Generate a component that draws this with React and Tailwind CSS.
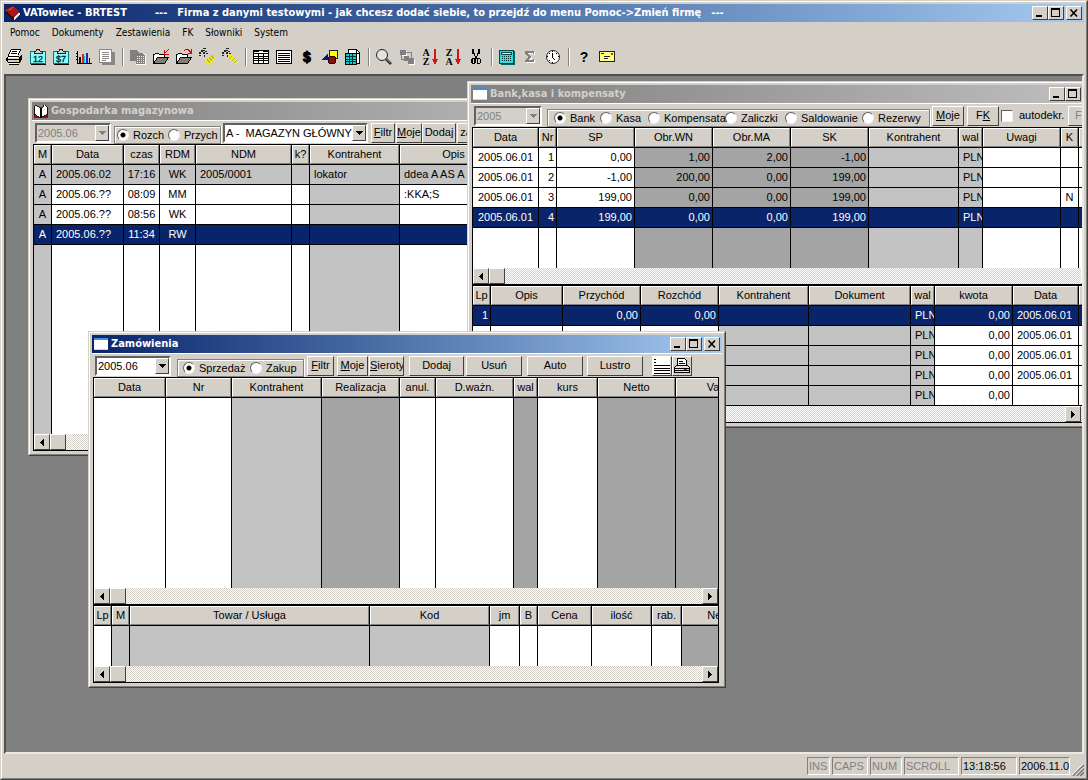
/**
 * VATowiec - main MDI shell with the warehouse, bank and order windows
 */
import React from 'react';
import clsx from 'clsx';

const RAISED = 'border border-t-white border-l-white border-r-[#404040] border-b-[#404040] bg-[#d4d0c8]';
const SUNKEN = 'border border-t-[#808080] border-l-[#808080] border-r-white border-b-white';

const FILL = {
  white: 'bg-white',
  light: 'bg-[#c3c3c3]',
  dark: 'bg-[#a4a4a4]',
};

const ALIGN = {
  left: 'text-left pl-1',
  center: 'text-center',
  right: 'text-right pr-0.5',
};

/* ---------- icons ---------- */

const Icon = ({ children, size = 'size-[18px]' }) => (
  <svg viewBox="0 0 18 18" className={size} shapeRendering="crispEdges" aria-hidden="true">
    {children}
  </svg>
);

const PrinterIcon = () => (
  <Icon>
    <path d="M5 2h9v1h-1v2h-1v3H3V6h1V4h1z" fill="#fff" />
    <path d="M5 1h10v2h-1v2h-1v2h-1V5h1V3h1V2H5v2H4v2H3v2H2V6h1V4h1V2h1z" />
    <path d="M6 3h5v1H6zM5 5h6v1H5z" />
    <path d="M2 8h11v1h1V7h1v5h-1v2h-1v2H2v-2H1v-4h1z" fill="#d4d0c8" />
    <path d="M2 8h11v1H2zM1 9h1v5H1zM0 10h1v3H0zM1 11h12v1H1zM13 9h1V8h1V7h1v5h-1v2h-1v1h-1zM2 14h11v1H2zM3 16h10v1H3z" />
    <path d="M2 9h10v1H2zM3 15h9v1H3z" fill="#fff" />
    <path d="M9 12h2v1H9z" fill="#d8c800" />
  </Icon>
);

const CalendarIcon = ({ label }) => (
  <Icon>
    <path d="M1.500 3.500h15v12h-15z" fill="#8ff" stroke="#087878" />
    <path d="M2 16.500h15" stroke="#000" />
    <path d="M5 5V3h2l1-2h2l1 2h2v2z" fill="#d4d0c8" stroke="#222" />
    <text x="9" y="14" fontSize="9" fontFamily="Liberation Sans, sans-serif" textAnchor="middle" stroke="#044" strokeWidth="0.3">
      {label}
    </text>
  </Icon>
);

const ChartIcon = () => (
  <Icon>
    <path d="M2 3h1v12h14v1H2zM1 5h1v1H1zM1 8h1v1H1zM1 11h1v1H1z" />
    <path d="M4 9h2v6H4z" fill="#111" />
    <path d="M7 6h2v9H7z" fill="#d22" />
    <path d="M9 8h1v7H9z" fill="#0cc" />
    <path d="M11 5h2v10h-2z" fill="#22c" />
    <path d="M14 10h1v5h-1z" fill="#111" />
  </Icon>
);

const PagesIcon = () => (
  <Icon>
    <path d="M4 4h13v13H4z" fill="#888" />
    <path d="M1.500 1.500h12v13h-12z" fill="#fff" stroke="#888" />
    <path d="M4 4.500h7M4 6.500h7M4 8.500h7M4 10.500h7M4 12.500h4" stroke="#888" />
  </Icon>
);

const CopyIcon = () => (
  <Icon>
    <path d="M1 2h6l3 3v8H1z" fill="#808080" />
    <path d="M7 5h7l3 3v9H7z" fill="#fff" />
    <path d="M7 5h6l3 3v8H7z" fill="#808080" />
    <path d="M8 8.500h7M8 10.500h7M8 12.500h7M8 14.500h7" stroke="#eee" strokeDasharray="1 1" />
  </Icon>
);

const FolderIcon = ({ inward }) => (
  <Icon>
    <path d="M1.500 15V6.500h1l1-1h3l1 1h5v3" fill="#fff" stroke="#000" />
    <path d="M1.500 15.500l4-6h11l-4 6z" fill="#808070" stroke="#000" />
    {inward ? (
      <path d="M16 1h1v1h-1zM15 2h1v1h-1zM14 3h1v1h-1zM12 2h1v4h4v1h-5zM13 4h1v1h-1z" fill="#d00" />
    ) : (
      <path d="M9 2h1V1h4v1h1v1h1V1h1v5h-4V5h2V4h-1V3h-1V2h-3v1H9z" fill="#d00" />
    )}
  </Icon>
);

const RopeIcon = ({ flip }) => (
  <Icon>
    <path d="M5 0h3v1H5zM5 2h2v1H5zM3 2h2v2H3zM1 4h2v2H1zM5 4h2v2H5zM7 3h2v1H7zM8 5h2v1H8zM1 7h2v1H1zM6 7h1v2H6z" fill="#222" />
    {flip ? (
      <>
        <path d="M6 9l3-3 8 7v3h-4z" fill="#f4ec10" />
        <path d="M8 11l3-3M11 13l3-3M13 15l3-3" stroke="#b0a860" />
      </>
    ) : (
      <>
        <path d="M7 13l3 4 7-7-3-4z" fill="#f4ec10" />
        <path d="M9 11l3 4M11 9l3 4M13 7l3 4" stroke="#b0a860" />
      </>
    )}
  </Icon>
);

const TableIcon = () => (
  <Icon>
    <path d="M1.500 2.500h15v13h-15z" fill="#fff" stroke="#000" />
    <path d="M2 3.500h14M2 5.500h14M2 8.500h14M2 10.500h14M2 12.500h14M6.500 5v10M11.500 5v10" stroke="#000" />
    <path d="M7 3h4v1H7z" fill="#fff" />
  </Icon>
);

const ListIcon = () => (
  <Icon>
    <path d="M1.500 2.500h15v13h-15z" fill="#fff" stroke="#000" />
    <path d="M3 5.500h12M3 7.500h12M3 9.500h12M3 11.500h12M3 13.500h12" stroke="#000" />
  </Icon>
);

const DollarIcon = () => (
  <Icon>
    <text x="9" y="14" fontSize="14" fontWeight="bold" fontFamily="Liberation Sans, sans-serif" textAnchor="middle" stroke="#000">
      $
    </text>
  </Icon>
);

const ShapesIcon = () => (
  <Icon>
    <path d="M8.500 2.500h8v8h-8z" fill="#ff0" stroke="#222" />
    <path d="M0 12l7-7v7z" fill="#00128c" />
    <circle cx="11" cy="12" r="4" fill="#7c1414" stroke="#300" />
  </Icon>
);

const SheetIcon = () => (
  <Icon>
    <path d="M4.500 1.500h8l3 3v11h-11z" fill="#fff" stroke="#000" />
    <path d="M12 2v3h4" stroke="#000" fill="none" />
    <path d="M1.500 5.500h11v11h-11z" fill="#1cc" stroke="#000" />
    <path d="M2 8.500h10M2 11.500h10M2 13.500h10M5.500 6v10M8.500 6v10" stroke="#033" />
  </Icon>
);

const SearchIcon = () => (
  <Icon>
    <circle cx="7" cy="7" r="5.500" fill="#e4e2dc" stroke="#222" shapeRendering="auto" />
    <path d="M11 11l5 5" stroke="#222" strokeWidth="2.500" shapeRendering="auto" />
    <path d="M11.500 11l4 4" stroke="#aaa" shapeRendering="auto" />
  </Icon>
);

const LinkedIcon = () => (
  <Icon>
    <path d="M3 3h6v5H3zM11 11h6v6h-6z" fill="#fff" />
    <path d="M2 2h6v5H2zM6 8h5v5H6zM10 10h6v6h-6z" fill="#808080" />
    <path d="M8 4.500h5.500V10M3.500 7v4.500H6" stroke="#808080" fill="none" />
  </Icon>
);

const SortIcon = ({ top, bottom }) => (
  <Icon>
    <text x="5" y="8" fontSize="10" fontWeight="bold" fontFamily="Liberation Serif, serif" textAnchor="middle">{top}</text>
    <text x="5" y="17" fontSize="10" fontWeight="bold" fontFamily="Liberation Serif, serif" textAnchor="middle">{bottom}</text>
    <path d="M13 1h2v11h-2z" fill="#e01010" />
    <path d="M11 11h6l-3 6z" fill="#e01010" />
  </Icon>
);

const ScissorsIcon = () => (
  <Icon>
    <path d="M5 1h2v4h1v3h1v2H8V8H7V6H5zM11 1h2v5h-2v2h-1v2H9V8h1V5h1z" />
    <path d="M8 9h2v2H8zM5 10h3v1H5zM4 11h2v4H4zM5 15h3v1H5zM7 11h2v4H7zM10 10h3v1h-3zM10 11h1v4h-1zM10 15h3v1h-3zM13 11h1v4h-1z" />
  </Icon>
);

const CalculatorIcon = () => (
  <Icon>
    <path d="M3 3h14v14H3z" fill="#066" />
    <path d="M1.500 2.500h14v13h-14z" fill="#3dd" stroke="#044" />
    <path d="M3.500 4.500h10v2h-10z" fill="#bff" stroke="#044" />
    <path d="M4 8.500h10M4 10.500h10M4 12.500h10" stroke="#033" strokeDasharray="1 1" />
  </Icon>
);

const SigmaIcon = () => (
  <Icon>
    <path d="M5 4h9v3h-1l-1-1H8l3 4-3 3h4l2-1v3H5v-1l3-4-3-4z" fill="#fff" />
    <path d="M4 3h9v3h-1l-1-1H7l3 4-3 3h4l2-1v3H4v-1l3-4-3-4z" fill="#808080" />
  </Icon>
);

const ClockIcon = () => (
  <Icon>
    <circle cx="9" cy="9" r="6.500" fill="#fff" stroke="#222" shapeRendering="auto" />
    <path d="M8 3h1v1H8zM8 14h1v1H8zM3 8h1v1H3zM14 8h1v1h-1zM5 5h1v1H5zM12 5h1v1h-1zM5 12h1v1H5z" />
    <path d="M8.500 5v4.500l3 3" stroke="#000" fill="none" />
  </Icon>
);

const HelpIcon = () => (
  <Icon>
    <text x="9" y="14" fontSize="14" fontWeight="bold" fontFamily="Liberation Sans, sans-serif" textAnchor="middle">?</text>
  </Icon>
);

const MailIcon = () => (
  <Icon>
    <path d="M1.500 3.500h15v10h-15z" fill="#ffff80" stroke="#222" />
    <path d="M3 5.500h3M6 8.500h6M6 10.500h4" stroke="#222" />
    <path d="M13 5h2v2h-2z" fill="#c03000" />
  </Icon>
);

const RedBookIcon = () => (
  <Icon size="size-4">
    <path d="M0 6l9-5 8 7-7 6z" fill="#a81818" />
    <path d="M0 6l10 8v4L0 9z" fill="#3c0808" />
    <path d="M10 14l7-6v3l-7 6z" fill="#f4e8e0" />
    <path d="M4 6l5-3" stroke="#f06060" />
  </Icon>
);

const OpenBookIcon = () => (
  <Icon size="size-4">
    <path d="M1 5h16v12H1z" fill="#8c1010" />
    <path d="M2 3h2l5 3v10H7l-5-3z" fill="#fff" stroke="#200" />
    <path d="M10 6l3-4 3 2v9l-3 1-3 2z" fill="#fff" stroke="#200" />
    <path d="M8 6h2v11H8z" />
  </Icon>
);

const FormIcon = () => (
  <Icon size="size-4">
    <path d="M1 2h16v14H1z" fill="#fff" />
    <path d="M1 2h16v3H1z" fill="#3c8ce0" />
    <path d="M1 15h16v1H1z" fill="#c0d8f0" />
  </Icon>
);

/* ---------- window chrome ---------- */

const controlClass = 'flex h-3.5 w-4 items-center justify-center';

const WindowControls = () => (
  <div className="flex shrink-0 items-center pr-0.5">
    <button aria-label="Minimalizuj" className={clsx(RAISED, controlClass)}>
      <svg viewBox="0 0 10 10" className="size-2.5" shapeRendering="crispEdges"><path d="M1 7h6v2H1z" /></svg>
    </button>
    <button aria-label="Maksymalizuj" className={clsx(RAISED, controlClass)}>
      <svg viewBox="0 0 10 10" className="size-2.5" shapeRendering="crispEdges"><path d="M0 0h9v9H0zM1 2v6h7V2z" fillRule="evenodd" /></svg>
    </button>
    <button aria-label="Zamknij" className={clsx(RAISED, controlClass, 'ml-0.5')}>
      <svg viewBox="0 0 10 10" className="size-2.5"><path d="M1.500 1.500l6.500 7M8 1.500l-6.500 7" stroke="#000" strokeWidth="1.600" /></svg>
    </button>
  </div>
);

const Window = ({ title, icon, active, className, toolbar, children }) => (
  <section
    className={clsx(
      'absolute border border-t-[#d4d0c8] border-l-[#d4d0c8] border-r-[#404040] border-b-[#404040] bg-[#d4d0c8]',
      className
    )}
  >
    <div className="border border-t-white border-l-white border-r-[#808080] border-b-[#808080] p-0.5">
      <header
        className={clsx(
          'flex h-[18px] items-center gap-0.5 pl-px font-[DejaVu_Sans_Condensed,sans-serif] text-[11px] font-bold',
          active
            ? 'bg-linear-to-r from-[#0a246a] to-[#a6caf0] text-white'
            : 'bg-linear-to-r from-[#808080] to-[#c0c0c0] text-[#d4d0c8]'
        )}
      >
        {icon}
        <h2 className="flex-1 truncate">{title}</h2>
        <WindowControls />
      </header>
      <div className="flex h-6 items-center overflow-hidden border-t border-t-white pl-[3px]">{toolbar}</div>
      <div className="ml-px mr-[3px] mb-px overflow-hidden border-x border-b border-black">{children}</div>
    </div>
  </section>
);

const Combo = ({ label, value, disabled, className }) => (
  <div className={clsx('relative h-5 shrink-0', className)}>
    <select
      aria-label={label}
      disabled={disabled}
      className={clsx(
        'h-full w-full appearance-none border-2 border-t-[#606060] border-l-[#606060] border-r-white border-b-white pl-px leading-[14px] opacity-100',
        disabled ? 'bg-[#d4d0c8] text-[#808080]' : 'bg-white text-black'
      )}
    >
      <option>{value}</option>
    </select>
    <span className={clsx(RAISED, 'pointer-events-none absolute top-0.5 right-0.5 flex h-4 w-3.5 items-center justify-center')}>
      <svg viewBox="0 0 7 4" className="h-1 w-[7px]" shapeRendering="crispEdges">
        <path d="M0 0h7L3.500 4z" fill={disabled ? '#808080' : '#000'} />
      </svg>
    </span>
  </div>
);

const RadioGroup = ({ name, options, className }) => (
  <fieldset className={clsx('flex h-[18px] shrink-0 items-center self-end border border-[#808080] shadow-[inset_1px_1px_#fff,1px_0_#fff]', className)}>
    {options.map((option, i) => (
      <label key={option.text} className={clsx('flex shrink-0 items-center gap-1', option.width)}>
        <input
          type="radio"
          name={name}
          defaultChecked={i === 0}
          className="size-3 shrink-0 appearance-none rounded-full border border-t-[#606060] border-l-[#606060] border-r-[#f0f0f0] border-b-[#f0f0f0] bg-white checked:bg-[radial-gradient(circle,#000_2px,#fff_3px)]"
        />
        {option.text}
      </label>
    ))}
  </fieldset>
);

const ToolButton = ({ children, className }) => (
  <button className={clsx(RAISED, 'h-5 shrink-0 overflow-hidden whitespace-nowrap', className)}>{children}</button>
);

const Scrollbar = ({ className }) => (
  <div className={clsx('flex h-4 bg-[repeating-conic-gradient(#fff_0_25%,#d4d0c8_0_50%)] bg-[length:2px_2px]', className)}>
    <button aria-label="W lewo" className={clsx(RAISED, 'flex h-4 w-4 items-center justify-center')}>
      <svg viewBox="0 0 4 7" className="h-[7px] w-1" shapeRendering="crispEdges"><path d="M4 0v7L0 3.500z" /></svg>
    </button>
    <div className={clsx(RAISED, 'h-4 w-4')} />
    <button aria-label="W prawo" className={clsx(RAISED, 'ml-auto flex h-4 w-4 items-center justify-center')}>
      <svg viewBox="0 0 4 7" className="h-[7px] w-1" shapeRendering="crispEdges"><path d="M0 0v7L4 3.500z" /></svg>
    </button>
  </div>
);

const Grid = ({ columns, rows = [], selected, grayRow, filler, thick, scrollClass }) => (
  <>
    <table className={clsx('w-px table-fixed border-separate border-spacing-0 border-t border-black', thick && 'border-t-2')}>
      <thead>
        <tr>
          {columns.map((col, i) => (
            <th key={i} className={clsx('h-5 border-r border-b border-black p-0 font-normal', col.width)}>
              <div className="h-[19px] overflow-hidden border border-t-white border-l-white border-r-[#808080] border-b-[#808080] bg-[#d4d0c8] leading-[17px] whitespace-nowrap">
                {col.title}
              </div>
            </th>
          ))}
        </tr>
      </thead>
      <tbody>
        {rows.map((row, r) => (
          <tr key={r} className={r === selected ? 'text-white' : 'text-black'}>
            {columns.map((col, i) => (
              <td
                key={i}
                className={clsx(
                  'h-5 overflow-hidden border-r border-b border-black p-0 leading-[19px] whitespace-nowrap',
                  r === selected ? 'bg-[#0a246a]' : r === grayRow ? FILL.light : FILL[col.fill || 'white'],
                  ALIGN[col.align || 'left']
                )}
              >
                {row[i]}
              </td>
            ))}
          </tr>
        ))}
        {filler && (
          <tr>
            {columns.map((col, i) => (
              <td key={i} className={clsx('border-r border-black p-0', filler, FILL[col.fill || 'white'])} />
            ))}
          </tr>
        )}
      </tbody>
    </table>
    <Scrollbar className={scrollClass} />
  </>
);

/* ---------- data ---------- */

const stockColumns = [
  { title: 'M', width: 'w-[18px]', fill: 'light', align: 'center' },
  { title: 'Data', width: 'w-[72px]' },
  { title: 'czas', width: 'w-9', align: 'center' },
  { title: 'RDM', width: 'w-9', align: 'center' },
  { title: 'NDM', width: 'w-24' },
  { title: 'k?', width: 'w-[18px]' },
  { title: 'Kontrahent', width: 'w-[90px]', fill: 'light' },
  { title: 'Opis', width: 'w-[108px]' },
  { title: 'Wartość', width: 'w-[120px]' },
];

const stockRows = [
  ['A', '2005.06.02', '17:16', 'WK', '2005/0001', '', 'lokator', 'ddea A AS A'],
  ['A', '2005.06.??', '08:09', 'MM', '', '', '', ':KKA;S'],
  ['A', '2005.06.??', '08:56', 'WK'],
  ['A', '2005.06.??', '11:34', 'RW'],
];

const bankColumns = [
  { title: 'Data', width: 'w-[66px]', align: 'center' },
  { title: 'Nr', width: 'w-[18px]', align: 'right' },
  { title: 'SP', width: 'w-[78px]', align: 'right' },
  { title: 'Obr.WN', width: 'w-[78px]', align: 'right', fill: 'dark' },
  { title: 'Obr.MA', width: 'w-[78px]', align: 'right', fill: 'dark' },
  { title: 'SK', width: 'w-[78px]', align: 'right', fill: 'dark' },
  { title: 'Kontrahent', width: 'w-[90px]', fill: 'light' },
  { title: 'wal', width: 'w-6', fill: 'light' },
  { title: 'Uwagi', width: 'w-[78px]' },
  { title: 'K', width: 'w-[18px]', align: 'center' },
  { title: '', width: 'w-6' },
];

const bankRows = [
  ['2005.06.01', '1', '0,00', '1,00', '2,00', '-1,00', '', 'PLN'],
  ['2005.06.01', '2', '-1,00', '200,00', '0,00', '199,00', '', 'PLN'],
  ['2005.06.01', '3', '199,00', '0,00', '0,00', '199,00', '', 'PLN', '', 'N'],
  ['2005.06.01', '4', '199,00', '0,00', '0,00', '199,00', '', 'PLN'],
];

const entryColumns = [
  { title: 'Lp', width: 'w-[18px]', align: 'right' },
  { title: 'Opis', width: 'w-[72px]' },
  { title: 'Przychód', width: 'w-[78px]', align: 'right' },
  { title: 'Rozchód', width: 'w-[78px]', align: 'right' },
  { title: 'Kontrahent', width: 'w-[90px]', fill: 'light' },
  { title: 'Dokument', width: 'w-[102px]', fill: 'light' },
  { title: 'wal', width: 'w-6', fill: 'light' },
  { title: 'kwota', width: 'w-[78px]', align: 'right' },
  { title: 'Data', width: 'w-[66px]' },
  { title: '', width: 'w-6' },
];

const entryRows = [
  ['1', '', '0,00', '0,00', '', '', 'PLN', '0,00', '2005.06.01'],
  ['', '', '', '', '', '', 'PLN', '0,00', '2005.06.01'],
  ['', '', '', '', '', '', 'PLN', '0,00', '2005.06.01'],
  ['', '', '', '', '', '', 'PLN', '0,00', '2005.06.01'],
  ['', '', '', '', '', '', 'PLN', '0,00', ''],
];

const orderColumns = [
  { title: 'Data', width: 'w-[72px]' },
  { title: 'Nr', width: 'w-[66px]' },
  { title: 'Kontrahent', width: 'w-[90px]', fill: 'light' },
  { title: 'Realizacja', width: 'w-[78px]', fill: 'dark' },
  { title: 'anul.', width: 'w-9' },
  { title: 'D.ważn.', width: 'w-[78px]' },
  { title: 'wal', width: 'w-6', fill: 'dark' },
  { title: 'kurs', width: 'w-[60px]' },
  { title: 'Netto', width: 'w-[78px]', fill: 'dark' },
  { title: 'Vat', width: 'w-[78px]', fill: 'dark' },
];

const itemColumns = [
  { title: 'Lp', width: 'w-[18px]' },
  { title: 'M', width: 'w-[18px]', fill: 'light' },
  { title: 'Towar / Usługa', width: 'w-60', fill: 'light' },
  { title: 'Kod', width: 'w-[120px]', fill: 'light' },
  { title: 'jm', width: 'w-[30px]' },
  { title: 'B', width: 'w-[18px]' },
  { title: 'Cena', width: 'w-[54px]' },
  { title: 'ilość', width: 'w-[60px]' },
  { title: 'rab.', width: 'w-[30px]' },
  { title: 'Netto', width: 'w-[78px]', fill: 'dark' },
];

const menuItems = ['Pomoc', 'Dokumenty', 'Zestawienia', 'FK', 'Słowniki', 'System'];

const toolbarGroups = [
  [
    ['Drukuj', <PrinterIcon />],
    ['Kalendarz', <CalendarIcon label="12" />],
    ['Płatności', <CalendarIcon label="$7" />],
    ['Wykres', <ChartIcon />],
    ['Raport', <PagesIcon />],
  ],
  [
    ['Kopiuj', <CopyIcon />],
    ['Importuj', <FolderIcon inward />],
    ['Eksportuj', <FolderIcon />],
    ['Powiąż', <RopeIcon />],
    ['Rozwiąż', <RopeIcon flip />],
  ],
  [
    ['Tabela', <TableIcon />],
    ['Lista', <ListIcon />],
    ['Waluty', <DollarIcon />],
    ['Kształty', <ShapesIcon />],
    ['Arkusz', <SheetIcon />],
  ],
  [
    ['Szukaj', <SearchIcon />],
    ['Powiązania', <LinkedIcon />],
    ['Sortuj rosnąco', <SortIcon top="A" bottom="Z" />],
    ['Sortuj malejąco', <SortIcon top="Z" bottom="A" />],
    ['Wytnij', <ScissorsIcon />],
  ],
  [
    ['Kalkulator', <CalculatorIcon />],
    ['Suma', <SigmaIcon />],
    ['Zegar', <ClockIcon />],
  ],
  [
    ['Pomoc', <HelpIcon />],
    ['Poczta', <MailIcon />],
  ],
];

/* ---------- child windows ---------- */

const StockWindow = () => (
  <Window
    title="Gospodarka magazynowa"
    icon={<OpenBookIcon />}
    className="top-[22px] left-[22px] w-[600px]"
    toolbar={
      <>
        <Combo label="Okres" value="2005.06" disabled className="w-[76px]" />
        <RadioGroup
          name="stock"
          className="ml-[3px] w-[107px] pl-0.5"
          options={[{ text: 'Rozch', width: 'w-[51px]' }, { text: 'Przych' }]}
        />
        <Combo label="Magazyn" value={'A -\u00a0 MAGAZYN GŁÓWNY'} className="ml-0.5 w-[145px]" />
        <ToolButton className="ml-[3px] w-6"><u>F</u>iltr</ToolButton>
        <ToolButton className="ml-px w-[26px]"><u>M</u>oje</ToolButton>
        <ToolButton className="w-[34px]">Dodaj</ToolButton>
        <ToolButton className="ml-px w-9">zakup</ToolButton>
      </>
    }
  >
    <Grid columns={stockColumns} rows={stockRows} selected={3} grayRow={0} filler="h-[189px]" />
  </Window>
);

const BankWindow = () => (
  <Window
    title="Bank,kasa i kompensaty"
    icon={<FormIcon />}
    className="top-[5px] left-[461px] w-[638px]"
    toolbar={
      <>
        <Combo label="Rok" value="2005" disabled className="w-[68px]" />
        <RadioGroup
          name="bank"
          className="ml-[5px] w-[383px] pl-1.5"
          options={[
            { text: 'Bank', width: 'w-[46px]' },
            { text: 'Kasa', width: 'w-12' },
            { text: 'Kompensata', width: 'w-[77px]' },
            { text: 'Zaliczki', width: 'w-[60px]' },
            { text: 'Saldowanie', width: 'w-[77px]' },
            { text: 'Rezerwy' },
          ]}
        />
        <ToolButton className="ml-0.5 w-8"><u>M</u>oje</ToolButton>
        <ToolButton className="ml-[3px] w-8">F<u>K</u></ToolButton>
        <label className="ml-0.5 flex shrink-0 items-center gap-1.5">
          <input type="checkbox" className="size-3 appearance-none border border-t-[#606060] border-l-[#606060] border-r-[#f0f0f0] border-b-[#f0f0f0] bg-white checked:bg-black" />
          autodekr.
        </label>
        <ToolButton className="ml-1 w-8 text-[#808080]">Filtr</ToolButton>
      </>
    }
  >
    <Grid columns={bankColumns} rows={bankRows} selected={3} filler="h-10" />
    <Grid columns={entryColumns} rows={entryRows} selected={0} thick scrollClass="pr-4" />
  </Window>
);

const OrdersWindow = () => (
  <Window
    title="Zamówienia"
    icon={<FormIcon />}
    active
    className="top-[255px] left-[82px] w-[638px]"
    toolbar={
      <>
        <Combo label="Okres" value="2005.06" className="w-[76px]" />
        <RadioGroup
          name="orders"
          className="ml-1.5 w-[127px] pl-[5px]"
          options={[{ text: 'Sprzedaż', width: 'w-[67px]' }, { text: 'Zakup' }]}
        />
        <ToolButton className="ml-[3px] w-[27px]"><u>F</u>iltr</ToolButton>
        <ToolButton className="ml-[3px] w-[31px]"><u>M</u>oje</ToolButton>
        <ToolButton className="ml-px w-[35px]"><u>S</u>ieroty</ToolButton>
        <ToolButton className="ml-[5px] w-[55px]">Dodaj</ToolButton>
        <ToolButton className="ml-0.5 w-14">Usuń</ToolButton>
        <ToolButton className="ml-[5px] w-14">Auto</ToolButton>
        <ToolButton className="ml-1 w-14">Lustro</ToolButton>
        <button aria-label="Lista" className={clsx(RAISED, 'ml-[9px] h-5 w-5 shrink-0')}>
          <svg viewBox="0 0 18 18" className="size-[18px]" shapeRendering="crispEdges">
            <path d="M0 0h17v18H0z" fill="#fff" />
            <path d="M1 2.500h2M1 5.500h2" stroke="#000" />
            <path d="M1 8.500h16M1 11.500h16M1 13.500h16M1 16.500h16" stroke="#000" />
          </svg>
        </button>
        <button aria-label="Drukuj" className={clsx(RAISED, 'h-5 w-5 shrink-0')}>
          <svg viewBox="0 0 18 18" className="size-[18px]" shapeRendering="crispEdges">
            <path d="M4.500 9.500v-8h7l2 2v6z" fill="#fff" stroke="#000" />
            <path d="M6 4.500h4M6 6.500h6" stroke="#000" />
            <path d="M3.500 8.500l-2 2v5h15v-5l-2-2z" fill="#e8e4dc" stroke="#000" />
            <path d="M2 11.500h14M2 13.500h14" stroke="#000" />
            <path d="M11 12.500h3" stroke="#d00" />
          </svg>
        </button>
      </>
    }
  >
    <Grid columns={orderColumns} filler="h-[190px]" />
    <Grid columns={itemColumns} filler="h-10" thick />
  </Window>
);

const StatusCell = ({ children, className }) => (
  <div className={clsx(SUNKEN, 'h-[18px] overflow-hidden px-px leading-4 whitespace-nowrap', className)}>{children}</div>
);

const App = () => {
  return (
    <div className="flex min-h-screen flex-col border border-t-[#d4d0c8] border-l-[#d4d0c8] border-r-[#404040] border-b-[#404040] bg-[#d4d0c8] font-['Liberation_Sans',Arial,sans-serif] text-[11px] text-black">
      <div className="flex flex-1 flex-col border border-t-white border-l-white border-r-[#808080] border-b-[#808080] p-0.5">
        {/* Title bar */}
        <header className="flex h-[18px] items-center gap-0.5 bg-linear-to-r from-[#0a246a] to-[#a6caf0] pl-px font-[DejaVu_Sans_Condensed,sans-serif] font-bold text-white">
          <RedBookIcon />
          <h1 className="flex flex-1 whitespace-nowrap">
            <span>VATowiec - BRTEST</span>
            <span className="ml-7">---</span>
            <span className="ml-2.5">Firma z danymi testowymi - jak chcesz dodać siebie, to przejdź do menu Pomoc-&gt;Zmień firmę</span>
            <span className="ml-2.5">---</span>
          </h1>
          <WindowControls />
        </header>

        {/* Menu */}
        <nav className="flex h-5 items-center font-[DejaVu_Sans_Condensed,sans-serif] text-[10px]">
          {menuItems.map((item) => (
            <button key={item} className="px-1.5">{item}</button>
          ))}
        </nav>

        {/* Toolbar */}
        <div className="flex h-8 items-center pb-0.5">
          {toolbarGroups.map((group, g) => (
            <React.Fragment key={g}>
              {g > 0 && <div className="mx-[3px] h-[18px] w-0.5 border-l border-r border-l-[#808080] border-r-white" />}
              {group.map(([label, icon]) => (
                <button key={label} aria-label={label} className="flex h-[22px] w-[23px] items-center justify-start pl-0.5">
                  {icon}
                </button>
              ))}
            </React.Fragment>
          ))}
        </div>

        {/* Workspace */}
        <main className="relative flex-1 overflow-hidden border-2 border-t-[#505050] border-l-[#505050] border-r-[#ece9e2] border-b-[#ece9e2] bg-[#808080]">
          <StockWindow />
          <BankWindow />
          <OrdersWindow />
        </main>

        {/* Status bar */}
        <footer className="flex h-[22px] items-center justify-end gap-0.5 pt-0.5">
          <StatusCell className="w-[23px] text-[#808080]">INS</StatusCell>
          <StatusCell className="w-9 text-[#808080]">CAPS</StatusCell>
          <StatusCell className="w-8 text-[#808080]">NUM</StatusCell>
          <StatusCell className="w-[55px] text-[#808080]">SCROLL</StatusCell>
          <StatusCell className="w-14">13:18:56</StatusCell>
          <StatusCell className="w-[51px]">2006.11.08</StatusCell>
          <svg viewBox="0 0 13 13" className="size-3 self-end">
            <path d="M1 13L13 1M5 13l8-8M9 13l4-4" stroke="#808080" strokeWidth="2" />
            <path d="M0 12L12 0M4 12l8-8" stroke="#fff" />
          </svg>
        </footer>
      </div>
    </div>
  );
};

export default App;
